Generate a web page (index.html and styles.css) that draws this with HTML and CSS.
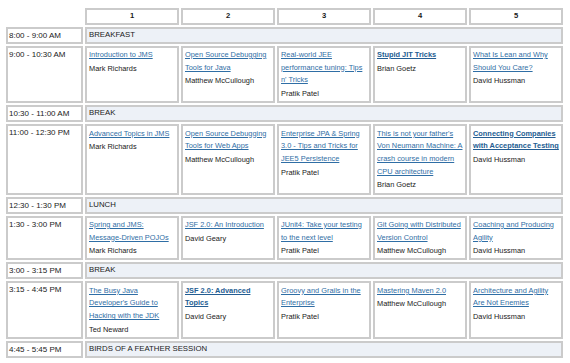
FILE: index.html
```html
<!DOCTYPE html>
<html>
<head>
<meta charset="utf-8">
<link rel="stylesheet" href="styles.css">
</head>
<body>
<table class="sched">
  <colgroup><col class="c-time"><col><col><col><col><col></colgroup>
  <tr class="head">
    <th class="blank"></th><th>1</th><th>2</th><th>3</th><th>4</th><th>5</th>
  </tr>
  <tr>
    <td class="time">8:00 - 9:00 AM</td>
    <td class="gen" colspan="5">BREAKFAST</td>
  </tr>
  <tr>
    <td class="time">9:00 - 10:30 AM</td>
    <td class="talk"><a href="#">Introduction to JMS</a><div class="who">Mark Richards</div></td>
    <td class="talk"><a href="#">Open Source Debugging Tools for Java</a><div class="who">Matthew McCullough</div></td>
    <td class="talk"><a href="#">Real-world JEE performance tuning: Tips n' Tricks</a><div class="who">Pratik Patel</div></td>
    <td class="talk"><a href="#" class="b">Stupid JIT Tricks</a><div class="who">Brian Goetz</div></td>
    <td class="talk"><a href="#">What Is Lean and Why Should You Care?</a><div class="who">David Hussman</div></td>
  </tr>
  <tr>
    <td class="time">10:30 - 11:00 AM</td>
    <td class="gen" colspan="5">BREAK</td>
  </tr>
  <tr>
    <td class="time">11:00 - 12:30 PM</td>
    <td class="talk"><a href="#">Advanced Topics in JMS</a><div class="who">Mark Richards</div></td>
    <td class="talk"><a href="#">Open Source Debugging Tools for Web Apps</a><div class="who">Matthew McCullough</div></td>
    <td class="talk"><a href="#">Enterprise JPA &amp; Spring 3.0 - Tips and Tricks for JEE5 Persistence</a><div class="who">Pratik Patel</div></td>
    <td class="talk"><a href="#">This is not your father's Von Neumann Machine: A crash course in modern CPU architecture</a><div class="who">Brian Goetz</div></td>
    <td class="talk"><a href="#" class="b">Connecting Companies with Acceptance Testing</a><div class="who">David Hussman</div></td>
  </tr>
  <tr>
    <td class="time">12:30 - 1:30 PM</td>
    <td class="gen" colspan="5">LUNCH</td>
  </tr>
  <tr>
    <td class="time">1:30 - 3:00 PM</td>
    <td class="talk"><a href="#">Spring and JMS: Message-Driven POJOs</a><div class="who">Mark Richards</div></td>
    <td class="talk"><a href="#">JSF 2.0: An Introduction</a><div class="who">David Geary</div></td>
    <td class="talk"><a href="#">JUnit4: Take your testing to the next level</a><div class="who">Pratik Patel</div></td>
    <td class="talk"><a href="#">Git Going with Distributed Version Control</a><div class="who">Matthew McCullough</div></td>
    <td class="talk"><a href="#">Coaching and Producing Agility</a><div class="who">David Hussman</div></td>
  </tr>
  <tr>
    <td class="time">3:00 - 3:15 PM</td>
    <td class="gen" colspan="5">BREAK</td>
  </tr>
  <tr>
    <td class="time">3:15 - 4:45 PM</td>
    <td class="talk"><a href="#">The Busy Java Developer's Guide to Hacking with the JDK</a><div class="who">Ted Neward</div></td>
    <td class="talk"><a href="#" class="b">JSF 2.0: Advanced Topics</a><div class="who">David Geary</div></td>
    <td class="talk"><a href="#">Groovy and Grails in the Enterprise</a><div class="who">Pratik Patel</div></td>
    <td class="talk"><a href="#">Mastering Maven 2.0</a><div class="who">Matthew McCullough</div></td>
    <td class="talk"><a href="#">Architecture and Agility Are Not Enemies</a><div class="who">David Hussman</div></td>
  </tr>
  <tr>
    <td class="time">4:45 - 5:45 PM</td>
    <td class="gen" colspan="5">BIRDS OF A FEATHER SESSION</td>
  </tr>
</table>
</body>
</html>
```

FILE: styles.css
```css
html, body {
  margin: 0;
  padding: 0;
  background: #ffffff;
}
body {
  padding: 6px 0 0 4px;
  font-family: "Liberation Sans", Arial, sans-serif;
  font-size: 7.4px;
  color: #1a1a1a;
}
.sched {
  table-layout: fixed;
  width: 561px;
  border-collapse: separate;
  border-spacing: 2px;
}
.c-time {
  width: 77px;
}
.sched th,
.sched td {
  box-sizing: border-box;
  border: 2px solid #cbcbcb;
  vertical-align: top;
  text-align: left;
  padding: 1px 1px 1px 2px;
}
.sched th {
  text-align: center;
  font-weight: bold;
  font-size: 7.6px;
  line-height: 10.6px;
  padding: 1px;
  background: #fff;
}
.sched th.blank {
  border: none;
  background: transparent;
}
.time {
  font-size: 8px;
  line-height: 10px;
  background: #fff;
}
.sched td.time {
  padding: 2px 1px 1px 1px;
}
.sched td.gen {
  background: #edf1f7;
  font-size: 7.8px;
  line-height: 10.6px;
  padding: 1px 1px 1px 2px;
}
.talk {
  background: #fff;
}
.sched td.talk {
  padding: 1px 1px 1px 2px;
}
.talk a {
  display: block;
  color: #2f6ea5;
  text-decoration: underline;
  line-height: 12.7px;
  padding-top: 0.3px;
}
.talk a.b {
  font-weight: bold;
  color: #245d92;
}
.who {
  line-height: 13.2px;
  color: #1a1a1a;
}
```
